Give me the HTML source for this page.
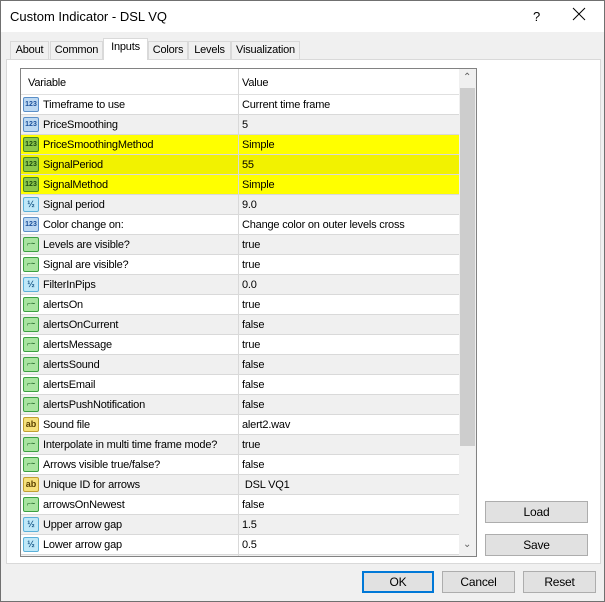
<!DOCTYPE html>
<html><head><meta charset="utf-8"><style>
*{box-sizing:border-box;margin:0;padding:0}
body{width:605px;height:602px;overflow:hidden;font-family:"Liberation Sans",sans-serif;font-size:11px;letter-spacing:-0.2px;color:#000;background:#f0f0f0;position:relative}
.win{position:absolute;left:0;top:0;width:605px;height:602px;border:1px solid #707070;background:#f0f0f0}
.title{position:absolute;left:0;top:0;width:603px;height:31px;background:#fff}
.title span{position:absolute;left:9px;top:8px;font-size:13px;letter-spacing:0}
.q{position:absolute;left:532px;top:8px;font-size:13px}
.x{position:absolute;left:571px;top:6px;width:14px;height:14px}
.tab{position:absolute;top:40px;height:19px;border:1px solid #d9d9d9;border-bottom:none;background:#f0f0f0;text-align:center;line-height:17px}
.tab.sel{top:37px;height:22px;background:#fff;border-color:#d9d9d9;z-index:2}
.panel{position:absolute;left:5px;top:58px;width:595px;height:505px;background:#fff;border:1px solid #d9d9d9}
.list{position:absolute;left:19px;top:67px;width:457px;height:489px;border:1px solid #828282;background:#fff;overflow:hidden}
.hdr{position:absolute;left:0;top:0;width:438px;height:26px;border-bottom:1px solid #e0e0e0}
.hdr span{position:absolute;top:8px}
.row{position:absolute;left:0;width:438px;height:20px;border-bottom:1px solid #d9d9d9}
.row .n{position:absolute;left:22px;top:4px;white-space:nowrap}
.row .v{position:absolute;left:221px;top:4px;white-space:nowrap}
.ic{position:absolute;left:2px;top:2px;width:16px;height:15px;border-radius:2px;font-size:7px;font-weight:bold;line-height:13px;text-align:center;letter-spacing:0}
.vl{position:absolute;left:217px;top:0;width:1px;height:489px;background:#d9d9d9}
.sb{position:absolute;left:438px;top:0;width:17px;height:487px;background:#f0f0f0}
.th{position:absolute;left:1px;top:19px;width:15px;height:358px;background:#cdcdcd}
.btn{position:absolute;height:22px;background:#e1e1e1;border:1px solid #adadad;text-align:center;line-height:20px;font-size:12px}
</style></head><body><div class="win">
<div class="title"><span>Custom Indicator - DSL VQ</span><div class="q">?</div>
<svg class="x" viewBox="0 0 14 14"><path d="M1 1L13 13M13 1L1 13" stroke="#000" stroke-width="1"/></svg></div>
<div class="tab" style="left:9px;width:39px">About</div>
<div class="tab" style="left:49px;width:53px">Common</div>
<div class="tab sel" style="left:102px;width:45px">Inputs</div>
<div class="tab" style="left:147px;width:40px">Colors</div>
<div class="tab" style="left:187px;width:43px">Levels</div>
<div class="tab" style="left:230px;width:69px">Visualization</div>
<div class="panel"></div>
<div class="list">
<div class="hdr"><span style="left:7px">Variable</span><span style="left:221px">Value</span></div>
<div id="rows"></div>
<div class="vl"></div>
<div class="sb"><div style="position:absolute;left:4px;top:3px;font-size:10px;color:#606060">&#8963;</div><div class="th"></div><div style="position:absolute;left:4px;top:470px;font-size:10px;color:#606060">&#8964;</div></div>
</div>
<div class="btn" style="left:484px;top:500px;width:103px">Load</div>
<div class="btn" style="left:484px;top:533px;width:103px">Save</div>
<div class="btn" style="left:361px;top:570px;width:72px;border:2px solid #0078d7;line-height:18px">OK</div>
<div class="btn" style="left:441px;top:570px;width:73px">Cancel</div>
<div class="btn" style="left:522px;top:570px;width:73px">Reset</div>
</div>
<script>
var d=[["i","Timeframe to use","Current time frame"],["i","PriceSmoothing","5"],["g","PriceSmoothingMethod","Simple"],["g","SignalPeriod","55"],["g","SignalMethod","Simple"],["f","Signal period","9.0"],["i","Color change on:","Change color on outer levels cross"],["b","Levels are visible?","true"],["b","Signal are visible?","true"],["f","FilterInPips","0.0"],["b","alertsOn","true"],["b","alertsOnCurrent","false"],["b","alertsMessage","true"],["b","alertsSound","false"],["b","alertsEmail","false"],["b","alertsPushNotification","false"],["s","Sound file","alert2.wav"],["b","Interpolate in multi time frame mode?","true"],["b","Arrows visible true/false?","false"],["s","Unique ID for arrows","&nbsp;DSL VQ1"],["b","arrowsOnNewest","false"],["f","Upper arrow gap","1.5"],["f","Lower arrow gap","0.5"],["f","",""]];
var h="";d.forEach(function(r,i){var y=26+i*20;var bg=i%2?"#f0f0f0":"#fff";if(i>=2&&i<=4)bg=i%2?"#f2f200":"#ffff00";
var st={i:"background:#bcd8f2;border:1px solid #5a8fc8;color:#1a4f9a",g:"background:#8cc84a;border:1px solid #4a8a20;color:#1a4a10",f:"background:#bfe8f8;border:1px solid #5ab0d8;color:#1a5a8a",b:"background:#a8e4a0;border:1px solid #3aa040;color:#1a6020",s:"background:#f6e07a;border:1px solid #c0a030;color:#5a4000"}[r[0]];
var t={i:"123",g:"123",f:"½",b:"⌐~",s:"ab"}[r[0]];
h+='<div class="row" style="top:'+y+'px;background:'+bg+'">'+(r[1]?'<div class="ic" style="'+st+(r[0]=="s"||r[0]=="f"?';font-size:9px':'')+'">'+t+'</div>':'')+'<span class="n">'+r[1]+'</span><span class="v">'+r[2]+'</span></div>';});
document.getElementById("rows").innerHTML=h;
</script>
</body></html>
